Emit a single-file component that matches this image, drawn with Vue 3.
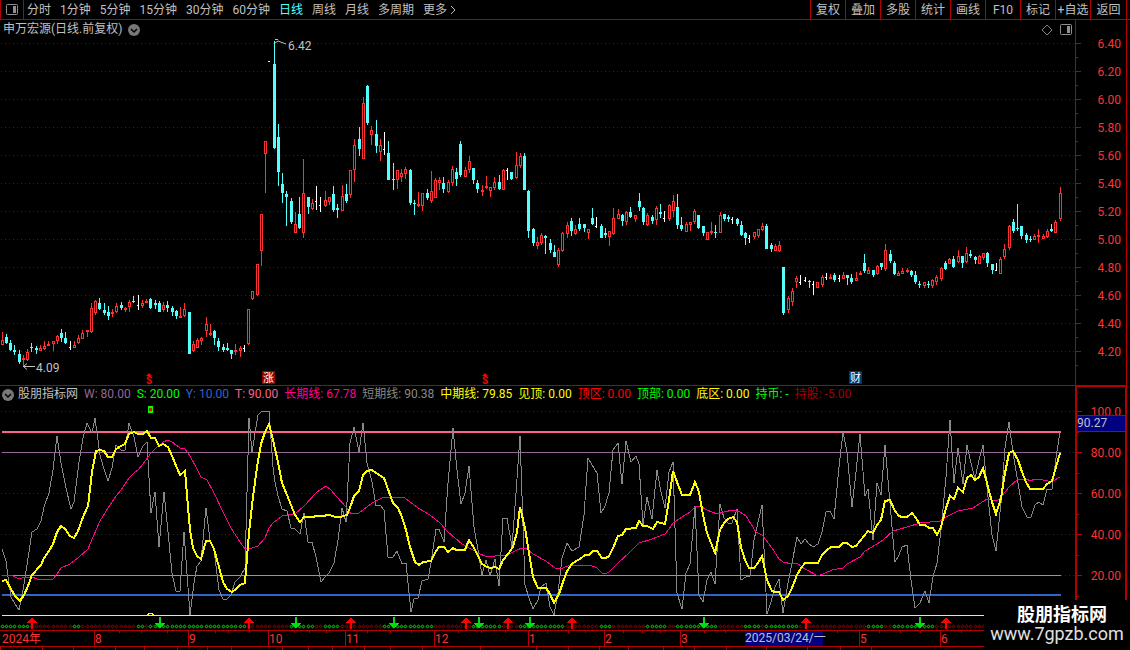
<template>
  <main class="terminal">
    <nav class="toolbar">
      <button class="panel-btn" aria-label="Toggle side panel">
        <svg width="12" height="12" viewBox="0 0 12 12">
          <rect x="0.5" y="0.5" width="11" height="10" rx="1" fill="none" stroke="#909090" />
          <rect x="7" y="2" width="3" height="7" fill="#909090" />
        </svg>
      </button>
      <div class="periods">
        <button
          v-for="period in periods"
          :key="period"
          :class="['period-btn', { active: selectedPeriod === period }]"
          @click="selectedPeriod = period"
        >
          {{ period }}
        </button>
        <button class="period-btn more-btn">
          更多
          <svg width="6" height="10" viewBox="0 0 6 10">
            <path d="M1 1L5 5L1 9" fill="none" stroke="#c0c0c0" />
          </svg>
        </button>
      </div>
      <div class="actions">
        <button v-for="action in actions" :key="action" class="action-btn">{{ action }}</button>
      </div>
    </nav>

    <div class="workspace">
      <div class="charts">
        <section class="pane">
          <header class="pane-title">
            <h1>申万宏源(日线.前复权)</h1>
            <button class="round-btn" aria-label="Chart options">
              <svg width="12" height="12" viewBox="0 0 12 12">
                <circle cx="6" cy="6" r="6" fill="#787878" />
                <path d="M3 5L6 8L9 5" fill="none" stroke="#000" stroke-width="1.5" />
              </svg>
            </button>
            <span class="pane-tools">
              <svg width="12" height="12" viewBox="0 0 12 12">
                <path d="M6 1L11 6L6 11L1 6Z" fill="none" stroke="#808080" />
              </svg>
              <svg width="12" height="12" viewBox="0 0 12 12">
                <rect x="0.5" y="0.5" width="11" height="10" rx="1" fill="none" stroke="#909090" />
                <rect x="7" y="2" width="3" height="7" fill="#909090" />
              </svg>
            </span>
          </header>

          <svg class="plot" viewBox="0 20 1126 365">
            <g class="crisp">
              <line
                v-for="tick in priceTicks"
                :key="'g' + tick.label"
                class="grid-line"
                x1="1"
                x2="1075"
                :y1="tick.y + 0.5"
                :y2="tick.y + 0.5"
              />
              <path class="axis-line" d="M1075.5 20V385" />
              <path
                v-for="tick in priceTicks"
                :key="'t' + tick.label"
                class="axis-line"
                :d="`M1076 ${tick.y + 0.5}h5M1076 ${tick.y + 14.5}h2`"
              />
            </g>
            <text
              v-for="tick in priceTicks"
              :key="tick.label"
              class="axis-label"
              x="1121"
              :y="tick.y + 5"
              text-anchor="end"
            >{{ tick.label }}</text>

            <g v-for="c in candles" :key="c.x" class="crisp">
              <template v-if="c.kind === 'w'">
                <rect :x="c.x" :y="c.high" width="1" :height="c.low - c.high" fill="#fff" />
                <rect :x="c.x - 1" :y="c.top" width="2" height="1" fill="#fff" />
              </template>
              <template v-else>
                <rect :x="c.x" :y="c.high" width="1" :height="c.low - c.high" :fill="colors[c.kind]" />
                <rect :x="c.x - 1" :y="c.top" width="3" :height="c.bottom - c.top" :fill="colors[c.kind]" />
                <rect
                  v-if="c.kind === 'r' && c.bottom - c.top > 2"
                  :x="c.x"
                  :y="c.top + 1"
                  width="1"
                  :height="c.bottom - c.top - 2"
                  fill="#000"
                />
              </template>
            </g>

            <path class="pointer" d="M275 43L278 41L286 44M275 39.500H278" />
            <text class="mark-label" x="288" y="50">6.42</text>
            <path class="pointer" d="M35 366.500H23M27 363.500L23.500 366.500L27 369.500" />
            <text class="mark-label" x="36" y="372">4.09</text>

            <g v-for="x in splitMarks" :key="x" fill="#f00">
              <path :d="`M${x} 373l3 3h-6z`" />
              <text :x="x" y="384" class="split-mark" text-anchor="middle">S</text>
            </g>
            <g v-for="badge in badges" :key="badge.text">
              <rect :x="badge.x" y="371" width="13" height="13" :fill="badge.color" />
              <text :x="badge.x + 1" y="382" class="badge-text">{{ badge.text }}</text>
            </g>
          </svg>
        </section>

        <section class="pane">
          <header class="pane-title indicator-title">
            <button class="round-btn" aria-label="Indicator options">
              <svg width="12" height="12" viewBox="0 0 12 12">
                <circle cx="6" cy="6" r="6" fill="#787878" />
                <path d="M3 5L6 8L9 5" fill="none" stroke="#000" stroke-width="1.5" />
              </svg>
            </button>
            <h2>股朋指标网</h2>
            <span v-for="item in readouts" :key="item.name" :style="{ color: item.color }">
              {{ item.name }}: {{ item.value }}
            </span>
          </header>

          <svg class="plot" viewBox="0 385 1126 245">
            <g class="crisp">
              <path class="axis-line" d="M0 385.500H1126" />
              <line
                v-for="tick in levelTicks"
                :key="'g' + tick.y"
                class="grid-line"
                x1="1"
                x2="1075"
                :y1="tick.y + 0.5"
                :y2="tick.y + 0.5"
              />
              <rect x="2" y="431" width="1059" height="2" fill="#ff6090" />
              <rect x="2" y="452" width="1059" height="1" fill="#986598" />
              <rect x="2" y="575" width="1059" height="1" fill="#00ff00" />
              <rect x="2" y="594" width="1059" height="2" fill="#3264c8" />
              <rect x="2" y="615" width="1059" height="1" fill="#ffff00" />
            </g>

            <g class="crisp">
              <polyline class="series" stroke="#888" :points="shortLine" />
              <polyline class="series" stroke="#ff0090" :points="longLine" />
              <polyline class="series middle" stroke="#ffff00" :points="middleLine" />
              <path d="M147 615.500L149 613.500H152L154 615.500" fill="none" stroke="#ffff00" />
            </g>
            <rect x="148" y="406" width="5" height="7" fill="#00ff00" />
            <rect x="149" y="408" width="3" height="3" fill="#f00" />

            <path
              v-for="dot in signalDots"
              :key="dot.x"
              :d="`M${dot.x} 625h1v1h1v1h-1v1h-1v-1h-1v-1h1z`"
              :stroke="dot.holding ? '#a00000' : '#00e000'"
              fill="none"
              stroke-width="0.6"
            />
            <g class="crisp">
              <path v-for="x in buySignals" :key="'b' + x" :d="`M${x} 617l5 6h-4v6h-2v-6h-4z`" fill="#f00" />
              <path v-for="x in sellSignals" :key="'s' + x" :d="`M${x} 629l5 -6h-4v-6h-2v6h-4z`" fill="#00e010" />
            </g>

            <g class="crisp">
              <path
                v-for="tick in levelTicks"
                :key="'t' + tick.y"
                class="axis-line"
                :d="`M1077 ${tick.y + 0.5}h5M1077 ${tick.y + 21.500}h2`"
              />
              <rect x="1076" y="386" width="50" height="260" fill="none" class="axis-line" stroke-width="2" />
            </g>
            <text
              v-for="tick in levelTicks"
              :key="tick.label"
              class="axis-label"
              x="1121"
              :y="tick.y + 5"
              text-anchor="end"
            >{{ tick.label }}</text>
            <rect class="axis-line crisp" x="1076.500" y="415.500" width="49" height="16" fill="#000080" />
            <text x="1077" y="427" class="mark-label">90.27</text>
          </svg>
        </section>

        <svg class="plot" viewBox="0 630 1126 20">
          <g class="crisp">
            <path class="axis-line" d="M0 630.500H1126M0 646.500H1126" />
            <path v-for="m in months" :key="m.x" class="axis-line" :d="`M${m.x - 0.5} 630V647`" />
            <path v-for="x in upperTicks" :key="'u' + x" class="axis-line" :d="`M${x + 0.5} 631v2`" />
            <path v-for="x in lowerTicks" :key="'l' + x" class="axis-line" :d="`M${x + 0.5} 647v3`" />
            <rect x="745" y="631" width="78" height="15" fill="#000080" />
          </g>
          <text class="axis-label" x="2" y="643">2024年</text>
          <text v-for="m in months" :key="m.label" class="axis-label" :x="m.x" y="643">{{ m.label }}</text>
          <text class="mark-label" x="745" y="642">2025/03/24/一</text>
        </svg>
      </div>
      <aside class="edge"></aside>
    </div>

    <div class="watermark">
      <strong>股朋指标网</strong>
      <span>www.7gpzb.com</span>
    </div>
  </main>
</template>

<script setup>
import { ref } from 'vue'

const periods = ['分时', '1分钟', '5分钟', '15分钟', '30分钟', '60分钟', '日线', '周线', '月线', '多周期']
const selectedPeriod = ref('日线')
const actions = ['复权', '叠加', '多股', '统计', '画线', 'F10', '标记', '+自选', '返回']

const readouts = [
  { name: 'W', value: '80.00', color: '#986598' },
  { name: 'S', value: '20.00', color: '#00ff00' },
  { name: 'Y', value: '10.00', color: '#3264c8' },
  { name: 'T', value: '90.00', color: '#ff6090' },
  { name: '长期线', value: '67.78', color: '#ff0090' },
  { name: '短期线', value: '90.38', color: '#888888' },
  { name: '中期线', value: '79.85', color: '#ffff00' },
  { name: '见顶', value: '0.00', color: '#ffff00' },
  { name: '顶区', value: '0.00', color: '#ff0000' },
  { name: '顶部', value: '0.00', color: '#00ff00' },
  { name: '底区', value: '0.00', color: '#ffff00' },
  { name: '持币', value: '-', color: '#00ff00' },
  { name: '持股', value: '-5.00', color: '#a00000' }
]

const colors = { r: '#ff3232', c: '#54ffff' }

const priceTicks = Array.from({ length: 12 }, (_, i) => ({
  y: 43 + i * 28,
  label: (6.4 - i * 0.2).toFixed(2)
}))

const levelTicks = [100, 80, 60, 40, 20].map((v, i) => ({
  y: 411 + i * 41,
  label: v === 100 ? '100.0' : v.toFixed(2)
}))

// kind, high, body top, body bottom, low
const rawCandles = `
r 332 340 345 345|c 334 337 343 344|c 340 343 350 351|c 345 350 352 355|c 350 354 362 364|r 355 358 360 366
r 349 352 360 361|c 343 347 348 352|c 346 348 350 354|r 345 348 351 351|r 341 346 349 350|r 341 344 346 346
r 341 341 344 351|r 335 336 341 344|c 329 333 338 342|c 332 338 343 344|w 341 347 348 350|r 341 345 348 348
r 335 338 343 344|r 330 333 339 339|r 330 330 332 337|r 303 308 332 333|r 300 301 313 315|c 298 303 309 310
c 303 310 313 315|c 306 312 316 320|r 309 312 314 317|r 303 306 312 313|c 302 305 308 310|r 307 308 310 312
r 300 302 307 312|c 296 301 302 303|w 295 305 306 310|r 300 303 306 308|r 299 301 303 303|c 298 299 308 309
c 300 303 305 309|c 301 303 312 312|r 302 305 310 312|c 301 305 308 312|c 306 308 312 316|c 310 311 316 319
r 307 316 318 318|r 303 309 316 317|c 312 312 354 354|r 341 344 351 352|r 338 340 348 348|r 337 338 341 345
r 317 324 331 337|r 324 333 335 336|c 330 331 338 345|c 338 341 347 351|c 344 347 350 352|c 343 348 350 351
c 350 350 354 359|r 344 350 352 355|r 346 348 351 357|w 345 348 349 352|r 309 309 344 345|r 291 291 299 300
r 264 264 295 296|r 214 214 251 266|r 141 141 154 193|w 61 61 62 62|c 41 64 148 149|c 124 137 172 186
c 173 184 193 203|c 191 194 197 226|c 198 201 222 224|r 212 224 233 233|c 197 214 228 229|r 159 193 233 238
c 197 197 207 214|r 199 203 209 210|w 186 201 202 210|w 197 205 206 212|r 191 200 206 207|r 197 197 202 205
c 186 194 210 212|c 204 208 210 218|r 185 196 211 211|c 184 194 201 203|r 170 170 195 198|r 139 145 170 182
c 127 139 149 156|r 97 103 159 159|c 85 86 123 125|r 126 130 135 145|c 120 134 146 153|r 139 145 152 161
w 132 149 150 155|c 141 153 180 180|c 163 179 180 190|r 170 170 180 189|r 169 173 177 182|r 167 169 174 179
c 169 170 203 205|c 200 203 204 215|r 192 204 206 207|r 193 193 206 211|c 189 193 198 200|r 171 191 201 203
r 178 180 198 198|r 177 180 183 190|c 177 183 189 193|r 180 182 192 193|r 166 169 183 186|c 168 172 179 186
c 141 144 175 177|r 167 170 177 177|r 156 161 170 173|c 168 168 180 184|c 180 183 189 193|r 185 190 192 196
r 176 186 188 189|r 187 187 191 197|r 177 182 188 190|c 175 182 189 190|r 169 170 190 190|w 168 170 171 180
c 172 172 179 180|r 152 165 178 179|r 153 156 166 168|c 153 156 190 190|c 190 191 231 238|c 228 229 243 246
r 237 242 246 249|r 233 235 243 245|c 235 236 238 254|c 239 243 250 253|c 245 252 257 257|r 248 250 265 267
r 232 233 251 252|r 222 225 234 238|c 218 221 231 236|r 225 229 234 235|c 218 224 229 231|c 224 224 228 232
r 229 229 233 239|c 208 218 224 225|w 217 226 227 228|c 224 226 238 238|c 228 233 235 238|r 231 231 237 246
r 208 218 234 235|r 209 214 219 219|c 214 215 221 226|r 211 212 222 225|c 207 212 217 218|r 215 215 219 222
c 193 201 207 211|c 207 208 222 225|r 213 215 225 226|c 215 217 221 224|r 206 208 220 225|c 204 212 214 218
w 211 218 219 222|r 204 205 219 221|r 195 201 211 217|c 194 207 225 229|c 217 225 229 231|r 222 224 232 232
r 222 222 225 231|r 209 211 222 224|c 215 215 228 229|c 226 226 233 236|r 232 232 240 240|r 222 231 233 235
c 225 232 233 238|r 212 215 233 233|c 214 214 219 221|c 215 217 219 222|w 217 219 220 224|c 218 219 224 226
c 221 225 235 236|c 232 233 238 245|w 235 238 239 243|r 232 232 237 239|r 229 229 236 238|r 223 226 230 231
c 224 226 249 249|c 243 245 249 252|r 244 246 251 251|r 241 245 251 252|c 267 267 313 315|r 296 298 310 313
r 288 291 302 306|r 276 278 282 288|w 275 282 283 285|w 277 280 281 282|c 280 281 282 288|w 281 284 285 295
r 282 282 288 288|r 275 277 285 287|w 273 277 278 280|r 274 277 279 279|c 273 275 280 282|w 275 278 279 282
r 272 275 279 279|c 275 275 278 285|c 274 278 282 284|r 272 278 281 281|r 271 273 275 275|c 254 263 271 273
r 267 270 274 274|c 270 270 275 277|r 265 266 274 275|c 263 263 267 270|r 244 250 269 271|c 250 254 261 263
c 261 263 274 275|r 271 273 276 276|r 268 271 274 274|r 268 270 272 273|c 270 271 275 277|c 271 275 282 284
c 281 284 285 288|r 282 282 286 288|c 281 284 285 288|r 279 280 286 288|r 275 277 282 285|r 267 268 279 281
c 261 263 269 270|r 258 259 264 264|c 256 259 267 268|r 250 256 262 263|c 256 256 263 268|r 247 253 262 263
c 250 254 256 258|c 256 257 260 264|r 255 256 264 264|r 253 253 258 260|c 252 253 263 267|c 264 264 270 274
w 263 270 271 271|r 257 259 274 274|r 244 249 257 259|r 225 226 248 250|c 219 222 231 233|c 204 228 229 231
c 226 226 236 239|c 233 235 240 243|c 236 239 240 242|r 234 236 240 240|r 229 235 237 243|r 234 236 239 239
r 229 231 237 238|c 224 229 231 232|r 220 222 233 233|r 187 193 219 221`

const barX = (i) => Math.floor(2.1 + i * 4.249)

const candles = rawCandles
  .trim()
  .split(/[|\n]/)
  .map((row, i) => {
    const [kind, high, top, bottom, low] = row.split(' ')
    return { kind, x: barX(i), high: +high, top: +top, bottom: +bottom, low: +low }
  })

const shortLine = `2,549 6,561 8,577 11,597 15,604 19,610 23,590 27,565 32,532 37,529 41,521 44,507 49,493 53,470
57,436 61,463 66,488 71,509 74,502 79,462 83,438 87,423 92,433 95,418 97,433 100,455 104,469 108,481 112,468
116,445 121,450 125,450 129,423 134,437 138,457 143,446 147,442 151,513 155,492 159,547 164,492 168,532 172,573
176,591 180,591 184,532 190,615 194,583 197,566 201,561 206,508 210,540 214,550 219,590 223,599 227,599 231,595
235,582 240,577 245,568 249,418 252,452 258,415 261,412 269,411 273,467 275,482 278,496 282,509 287,511 291,528
295,529 300,534 304,513 308,542 312,542 316,557 321,582 325,577 329,573 334,563 338,540 342,508 346,522 350,443
354,427 359,452 363,423 367,463 372,482 376,506 380,505 384,510 388,557 393,557 397,551 402,564 406,563 411,612
414,599 418,598 422,581 428,579 431,563 436,529 439,529 444,542 448,483 453,428 457,470 461,504 465,493 469,466
474,527 478,550 482,575 486,560 490,576 495,559 499,586 503,518 507,518 512,547 516,493 520,436 525,585 529,598
533,609 538,600 541,587 546,583 550,607 554,615 558,593 562,558 567,543 572,551 579,547 584,515 588,458 592,465
597,473 601,513 605,506 609,493 613,450 618,443 622,484 626,441 631,462 636,456 639,464 643,525 647,497 652,519
657,470 661,492 665,508 669,472 673,462 677,593 682,609 686,573 690,564 695,506 699,595 703,602 707,580 711,572
715,584 720,504 724,518 728,523 732,523 737,509 741,580 746,577 750,576 754,540 762,505 767,614 771,602 775,587
779,579 783,613 788,583 792,563 797,537 801,544 805,539 809,544 813,547 818,544 822,532 826,512 830,511 834,519
839,467 843,432 847,452 852,507 856,472 860,434 865,496 868,489 873,540 877,483 881,495 885,445 890,503 895,562
899,555 902,547 907,545 911,580 915,608 920,603 925,591 929,603 933,577 937,563 941,530 946,477 950,420 954,483
958,448 963,484 967,445 971,463 975,479 979,460 983,445 988,497 992,535 996,551 1001,503 1005,448 1009,422
1013,453 1018,483 1022,507 1027,517 1031,517 1035,505 1039,502 1043,505 1047,489 1052,489 1056,458 1060,432`

const middleLine = `2,581 6,580 11,589 15,596 20,601 24,595 28,586 32,575 41,565 44,558 49,551 53,544 57,532 61,526
65,529 70,536 74,538 78,531 83,517 88,506 92,472 96,451 100,450 104,451 108,457 112,457 116,449 121,446 125,444
129,434 134,432 138,434 143,434 147,431 151,438 155,438 159,446 163,444 168,447 172,456 177,468 180,475 185,471
190,530 193,548 197,556 201,559 206,541 210,541 214,549 219,567 223,582 227,589 232,592 236,589 240,585 245,583
249,533 253,497 257,467 261,444 265,432 269,424 273,440 278,462 282,483 287,495 291,505 295,515 300,522 304,517
312,517 317,516 321,516 330,515 335,517 340,517 347,515 351,505 354,496 359,491 363,475 367,471 372,470 376,473
384,478 389,492 393,503 398,508 402,517 406,530 410,547 415,562 419,565 423,562 431,561 436,551 439,547 444,547
448,552 453,548 456,550 465,550 469,540 474,548 478,556 482,564 487,567 491,568 495,567 499,569 503,560 508,554
513,547 517,532 520,507 525,528 529,553 533,577 538,588 546,588 550,594 554,603 559,594 563,582 567,571 572,564
576,561 580,559 585,555 589,555 593,551 597,551 602,558 606,558 609,556 614,546 618,536 622,535 626,529 636,528
639,521 643,526 647,526 653,529 657,522 661,523 665,524 669,500 673,471 677,482 682,495 690,495 695,482 699,492
703,515 707,533 711,543 715,553 720,530 724,523 728,519 733,517 737,522 741,547 745,560 749,568 754,568 758,563
762,556 767,580 772,591 775,592 779,592 783,600 788,596 792,588 797,575 801,568 805,563 818,563 822,555 827,550
831,547 839,547 843,543 847,543 852,547 856,546 860,541 864,536 868,531 873,533 877,525 881,520 885,501 890,500
895,511 899,516 902,517 907,517 912,513 916,518 920,525 925,525 929,528 933,528 937,535 941,527 946,508 950,496
954,499 958,488 963,492 967,478 971,475 975,480 979,477 983,468 988,487 992,502 996,514 1001,498 1005,473
1009,453 1013,451 1018,460 1022,472 1026,482 1030,489 1043,489 1047,484 1052,481 1056,467 1060,453`

const longLine = `2,575 11,575 19,579 25,577 32,577 37,579 45,579 53,579 57,574 61,568 70,564 78,558 88,549 93,537
100,521 108,508 116,496 121,490 129,478 134,473 138,470 143,464 151,453 155,449 163,442 168,440 172,442 180,448
185,449 190,456 197,469 201,477 207,480 214,493 223,512 231,528 240,542 245,549 252,548 258,546 265,538 269,528
273,523 282,516 295,514 304,506 317,492 326,486 330,489 337,497 347,508 351,514 359,513 363,510 372,503 380,499
384,497 397,497 405,498 418,508 430,515 440,523 448,532 462,544 473,550 478,553 487,557 495,556 507,555 517,550
522,548 527,549 533,554 546,561 555,568 560,569 568,566 578,565 590,565 597,568 602,573 605,574 609,572 618,563
630,552 639,543 652,539 665,534 669,529 673,523 682,517 690,512 695,507 700,506 707,510 717,514 724,512 733,510
740,512 746,516 756,532 762,535 772,548 779,559 783,562 792,564 797,563 805,569 818,576 832,570 843,568 847,564
860,557 865,551 877,544 883,540 893,531 907,527 920,523 940,521 946,517 958,511 973,508 987,499 997,501 1001,497
1009,487 1018,479 1027,479 1030,481 1035,479 1043,480 1048,481 1053,481 1060,477`

// bar ranges without a position, drawn green
const emptyRanges = [[0, 6], [17, 18], [32, 33], [35, 57], [68, 73], [76, 79], [90, 101], [111, 117], [122, 132],
  [141, 143], [152, 156], [159, 168], [175, 178], [180, 187], [204, 207], [210, 219]]

const signalDots = candles.map((c, i) => ({
  x: c.x,
  holding: !emptyRanges.some(([from, to]) => i >= from && i <= to)
}))

const buySignals = [32, 249, 351, 466, 508, 572, 806, 946]
const sellSignals = [160, 296, 394, 479, 530, 704, 920]
const splitMarks = [149, 485]
const badges = [
  { text: '涨', x: 262, color: '#900000' },
  { text: '财', x: 849, color: '#003870' }
]

const months = [
  { label: '8', x: 95 },
  { label: '9', x: 189 },
  { label: '10', x: 269 },
  { label: '11', x: 346 },
  { label: '12', x: 435 },
  { label: '1', x: 529 },
  { label: '2', x: 605 },
  { label: '3', x: 681 },
  { label: '5', x: 860 },
  { label: '6', x: 941 }
]
const upperTicks = [119, 141, 167, 215, 228, 249, 294, 309, 326, 367, 390, 411, 458, 481, 505, 547, 568, 585, 623,
  642, 660, 704, 725, 837, 879, 900, 920, 961]
const lowerTicks = [0, 42, 73, 115, 144, 177, 207, 231, 282, 308, 332, 364, 390, 422, 480, 536, 568, 599, 628, 663,
  694, 726, 766, 807, 840, 871]
</script>

<style>
body {
  margin: 0;
  background: #000;
}
</style>

<style scoped>
.terminal {
  position: relative;
  overflow: hidden;
  background: #000;
  color: #c0c0c0;
  font-family: Roboto, 'Noto Sans CJK SC', sans-serif;
  font-size: 12px;
  line-height: 16px;
}

button {
  padding: 0;
  border: 0;
  background: transparent;
  color: inherit;
  font: inherit;
  white-space: nowrap;
  cursor: pointer;
}

.toolbar {
  display: flex;
  height: 19px;
  border-bottom: 1px solid #b40000;
}

.panel-btn {
  display: flex;
  align-items: center;
  justify-content: center;
  width: 24px;
  box-sizing: border-box;
  border-left: 1px solid #b40000;
  border-right: 1px solid #b40000;
}

.periods {
  display: flex;
  flex: 1;
  gap: 9px;
  padding-left: 3px;
}

.period-btn.active {
  color: #54ffff;
}

.more-btn {
  display: flex;
  align-items: center;
  gap: 3px;
}

.actions {
  display: flex;
  padding-right: 3px;
}

.action-btn {
  width: 35px;
  box-sizing: border-box;
  border-left: 1px solid #b40000;
}

.action-btn:last-child {
  width: 37px;
  border-right: 1px solid #b40000;
}

.workspace {
  display: flex;
}

.charts {
  flex: 1;
  min-width: 0;
}

.edge {
  width: 4px;
  box-sizing: border-box;
  border-left: 1px solid #b40000;
}

.pane {
  position: relative;
}

.plot {
  display: block;
  width: 100%;
  overflow: visible;
}

.pane-title {
  position: absolute;
  top: 1px;
  left: 0;
  right: 0;
  display: flex;
  align-items: center;
  gap: 6px;
  padding: 0 54px 0 3px;
  line-height: 17px;
  white-space: nowrap;
}

.pane-title h1,
.pane-title h2 {
  margin: 0;
  font-size: 12px;
  font-weight: 400;
}

.round-btn {
  display: flex;
}

.pane-tools {
  display: flex;
  gap: 7px;
  margin-left: auto;
}

.indicator-title {
  padding-left: 2px;
}

.indicator-title h2 {
  margin-left: -2px;
}

.crisp {
  shape-rendering: crispEdges;
}

.grid-line {
  stroke: #900000;
  stroke-dasharray: 1 3;
}

.axis-line {
  stroke: #b40000;
}

.axis-label {
  fill: #ff3232;
}

.mark-label {
  fill: #c0c0c0;
}

.pointer {
  fill: none;
  stroke: #c0c0c0;
}

.split-mark {
  font-size: 10px;
  font-weight: 700;
}

.badge-text {
  fill: #fff;
  font-size: 11px;
}

.series {
  fill: none;
}

.middle {
  stroke-width: 2;
}

.watermark {
  position: absolute;
  right: 0;
  bottom: 0;
  display: flex;
  flex-direction: column;
  align-items: center;
  width: 146px;
  height: 50px;
  padding-top: 5px;
  box-sizing: border-box;
  background: #000;
  color: #fff;
  font-size: 18px;
  line-height: 19px;
}

.watermark strong {
  padding-left: 10px;
}

.watermark span {
  color: #e0e0e0;
}
</style>
